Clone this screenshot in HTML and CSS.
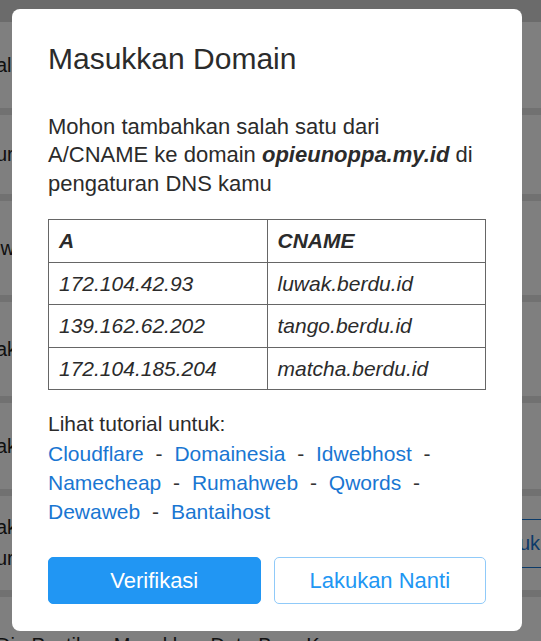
FILE: index.html
```html
<!DOCTYPE html>
<html lang="id">
<head>
  <meta charset="UTF-8">
  <meta name="viewport" content="width=device-width, initial-scale=1.0">
  <title>Masukkan Domain</title>
  <link rel="stylesheet" href="styles.css">
</head>
<body>
  <div class="page">
    <div class="topbar"></div>
    <ul class="list">
      <li class="item">
        <div class="item-text">alamat toko</div>
      </li>
      <li class="item item-sm">
        <div class="item-text">urutan produk</div>
      </li>
      <li class="item item-lg">
        <div class="item-text">iwarna tema</div>
      </li>
      <li class="item item-lg">
        <div class="item-text">akun pembayaran</div>
      </li>
      <li class="item">
        <div class="item-text">akun kurir</div>
      </li>
      <li class="item item-lg">
        <div class="item-text">
          <div>akun domain</div>
          <div class="item-sub">urus domain sendiri</div>
        </div>
        <button class="item-btn">Masuk</button>
      </li>
      <li class="item item-last">
        <div class="item-text">Dia Pastikan Masukkan Data Baru Kamu</div>
      </li>
    </ul>
  </div>

  <div class="overlay">
    <div class="modal">
      <h2 class="modal-title">Masukkan Domain</h2>
      <p class="modal-text">Mohon tambahkan salah satu dari<br>A/CNAME ke domain <b><i>opieunoppa.my.id</i></b> di pengaturan DNS kamu</p>

      <table class="dns-table">
        <thead>
          <tr>
            <th>A</th>
            <th>CNAME</th>
          </tr>
        </thead>
        <tbody>
          <tr>
            <td>172.104.42.93</td>
            <td>luwak.berdu.id</td>
          </tr>
          <tr>
            <td>139.162.62.202</td>
            <td>tango.berdu.id</td>
          </tr>
          <tr>
            <td>172.104.185.204</td>
            <td>matcha.berdu.id</td>
          </tr>
        </tbody>
      </table>

      <div class="tutorial">
        <p>Lihat tutorial untuk:</p>
        <p class="links">
          <a href="#">Cloudflare</a> <span class="sep">-</span>
          <a href="#">Domainesia</a> <span class="sep">-</span>
          <a href="#">Idwebhost</a> <span class="sep">-</span>
          <a href="#">Namecheap</a> <span class="sep">-</span>
          <a href="#">Rumahweb</a> <span class="sep">-</span>
          <a href="#">Qwords</a> <span class="sep">-</span>
          <a href="#">Dewaweb</a> <span class="sep">-</span>
          <a href="#">Bantaihost</a>
        </p>
      </div>

      <div class="actions">
        <button class="btn btn-primary">Verifikasi</button>
        <button class="btn btn-outline">Lakukan Nanti</button>
      </div>
    </div>
  </div>
</body>
</html>
```

FILE: styles.css
```css
* {
  box-sizing: border-box;
}

body {
  margin: 0;
  height: 641px;
  overflow: hidden;
  font-family: "Liberation Sans", Arial, sans-serif;
  background: #fff;
  color: #222;
}

/* page behind the dialog */
.page {
  height: 641px;
  overflow: hidden;
}

.topbar {
  height: 22px;
  background: #d6d6d6;
}

.list {
  list-style: none;
  margin: 0;
  padding: 0;
}

.item {
  display: flex;
  align-items: center;
  justify-content: space-between;
  height: 93px;
  border-bottom: 7px solid #e2e2e2;
  font-size: 20px;
  white-space: nowrap;
}

.item-sm {
  height: 86px;
}

.item-lg {
  height: 101px;
}

.item-last {
  align-items: flex-start;
  padding-top: 37px;
}

.item-text {
  margin-left: -4px;
}

.item-sub {
  margin-top: 8px;
}

.item-btn {
  height: 49px;
  margin-right: -20px;
  padding: 0 20px;
  font-family: inherit;
  font-size: 20px;
  color: #1976d2;
  background: #fff;
  border: 1px solid #1976d2;
  border-radius: 4px;
}

/* dialog */
.overlay {
  position: fixed;
  top: 0;
  left: 0;
  right: 0;
  bottom: 0;
  padding: 9px 0 0 12px;
  background: rgba(0, 0, 0, 0.5);
}

.modal {
  width: 510px;
  padding: 31px 36px 27px;
  background: #fff;
  border-radius: 8px;
  color: #2b2b2b;
}

.modal-title {
  margin: 0;
  font-size: 30px;
  font-weight: normal;
  line-height: 37px;
}

.modal-text {
  margin: 36px 0 0;
  font-size: 22px;
  line-height: 28.4px;
}

.dns-table {
  width: 100%;
  margin-top: 21px;
  border-collapse: collapse;
  table-layout: fixed;
  font-size: 21px;
  font-style: italic;
}

.dns-table th,
.dns-table td {
  padding: 9px 10px;
  border: 1px solid #666;
  line-height: 23.5px;
  text-align: left;
}

.dns-table th {
  font-weight: bold;
}

.tutorial {
  margin-top: 19px;
  font-size: 21px;
  line-height: 29.3px;
}

.tutorial p {
  margin: 0;
}

.links a {
  color: #1976d2;
  text-decoration: none;
}

.sep {
  margin: 0 6px;
  color: #333;
}

.actions {
  display: flex;
  gap: 13px;
  margin-top: 31px;
}

.btn {
  flex: 1;
  height: 47px;
  font-family: inherit;
  font-size: 22px;
  border-radius: 5px;
  cursor: pointer;
}

.btn-primary {
  color: #fff;
  background: #2196f3;
  border: 1px solid #2196f3;
}

.btn-outline {
  color: #2196f3;
  background: #fff;
  border: 1px solid #90caf9;
}
```
